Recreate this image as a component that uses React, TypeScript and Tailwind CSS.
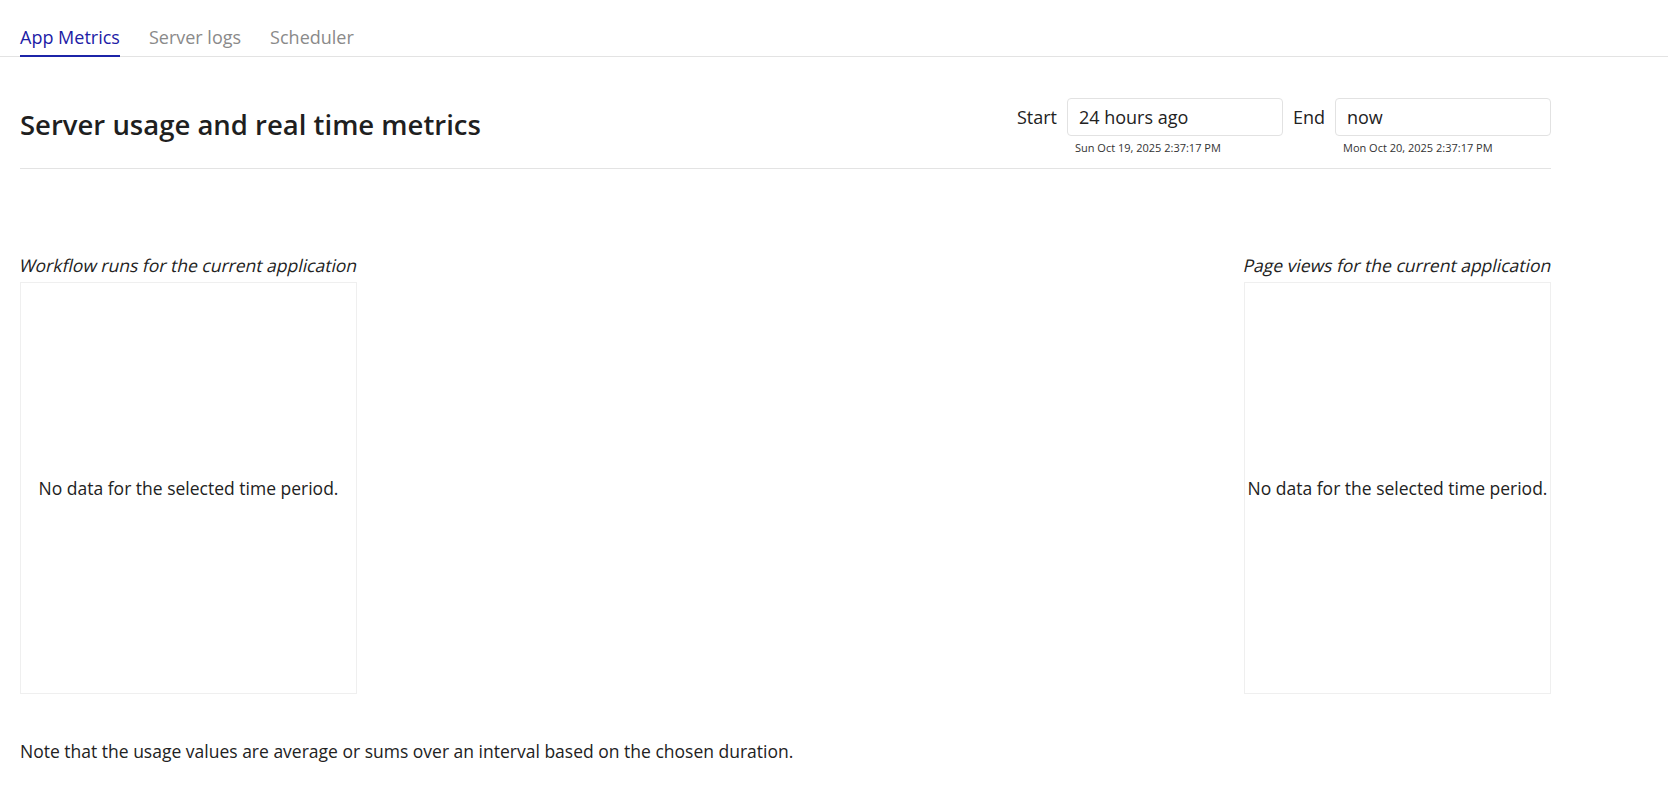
import React, { useState } from 'react';

const tabs = ['App Metrics', 'Server logs', 'Scheduler'];

function TimeField({ label, value, hint }: { label: string; value: string; hint: string }) {
  return (
    <div className="flex items-start gap-[10px]">
      <span className="flex h-[38px] items-center text-[18px] text-[#222]">{label}</span>
      <div className="flex w-[216px] flex-col">
        <input
          readOnly
          value={value}
          className="h-[38px] w-full rounded-[4px] border border-[#e2e2e2] bg-white px-[11px] text-[18px] text-[#222] outline-none"
        />
        <span className="mt-[5px] pl-[8px] text-[11px] leading-[14px] text-[#333]">{hint}</span>
      </div>
    </div>
  );
}

function ChartCard({ title, width }: { title: string; width: string }) {
  return (
    <div className={`flex flex-col ${width}`}>
      <span className="block whitespace-nowrap text-center text-[17.5px] leading-[24px] text-[#222]">
        <span className="inline-block skew-x-[-13deg]">{title}</span>
      </span>
      <div className="mt-[5px] flex h-[412px] items-center justify-center border border-[#efefef]">
        <span className="whitespace-nowrap text-[17.5px] text-[#222]">No data for the selected time period.</span>
      </div>
    </div>
  );
}

export default function App() {
  const [active, setActive] = useState('App Metrics');

  return (
    <div className="min-h-screen bg-white text-[#222]" style={{ fontFamily: '"Open Sans", "Noto Sans", sans-serif' }}>
      {/* Tabs */}
      <nav className="flex gap-[29px] border-b border-[#e3e3e3] px-[20px]">
        {tabs.map((t) => (
          <button
            key={t}
            onClick={() => setActive(t)}
            className={
              t === active
                ? '-mb-px border-b-[2px] border-[#1c24a8] pt-[25px] pb-[6px] text-[18px] leading-[24px] text-[#1c20a6]'
                : '-mb-px border-b-[2px] border-transparent pt-[25px] pb-[6px] text-[18px] leading-[24px] text-[#8a8a8a]'
            }
          >
            {t}
          </button>
        ))}
      </nav>

      <main className="w-[1551px] pl-[20px]">
        {/* Header */}
        <div className="flex items-center justify-between border-b border-[#e3e3e3] pt-[41px] pb-[13px]">
          <h1 className="mb-[4px] text-[27.5px] font-semibold leading-[36px] text-[#1f1f1f]">
            Server usage and real time metrics
          </h1>
          <div className="flex items-start gap-[10px]">
            <TimeField label="Start" value="24 hours ago" hint="Sun Oct 19, 2025 2:37:17 PM" />
            <TimeField label="End" value="now" hint="Mon Oct 20, 2025 2:37:17 PM" />
          </div>
        </div>

        {/* Charts */}
        <div className="mt-[84px] flex justify-between">
          <ChartCard title="Workflow runs for the current application" width="w-[337px]" />
          <ChartCard title="Page views for the current application" width="w-[307px]" />
        </div>

        <p className="mt-[45px] text-[17.5px] leading-[24px] text-[#222]">
          Note that the usage values are average or sums over an interval based on the chosen duration.
        </p>
      </main>
    </div>
  );
}
